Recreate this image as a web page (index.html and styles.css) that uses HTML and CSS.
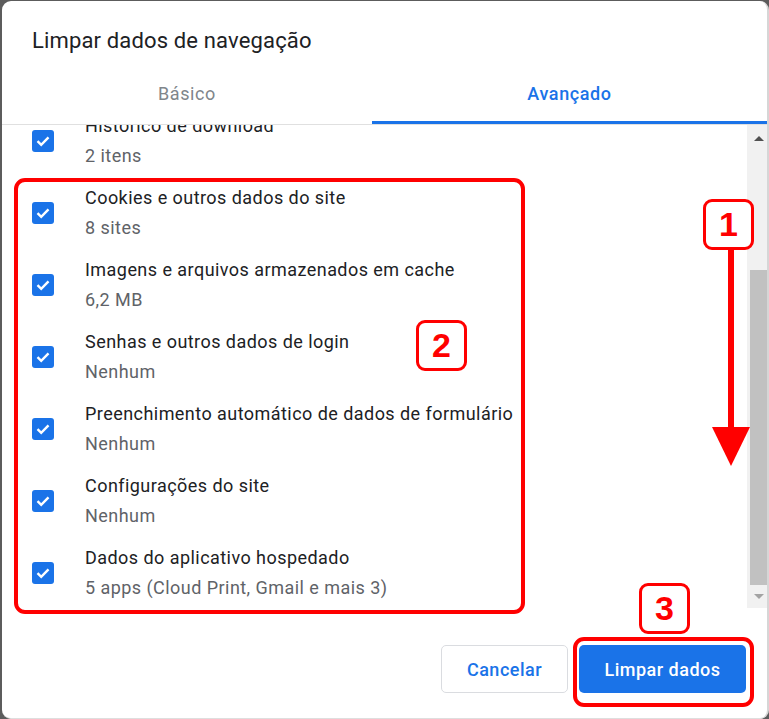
FILE: index.html
```html
<!DOCTYPE html>
<html lang="pt-BR">
<head>
<meta charset="utf-8">
<title>Limpar dados de navegação</title>
<link rel="stylesheet" href="styles.css">
</head>
<body>
<div class="dialog">
  <h1 class="title">Limpar dados de navegação</h1>
  <div class="tabs">
    <div class="tab">Básico</div>
    <div class="tab active">Avançado</div>
  </div>
  <div class="content">
    <div class="list">
      <div class="item">
        <span class="check"><svg viewBox="0 0 22 22" width="22" height="22"><path d="M5.5 11.2l3.7 3.6 7.3-7.4" fill="none" stroke="#fff" stroke-width="2.4"/></svg></span>
        <div class="texts"><div class="label">Histórico de download</div><div class="sub">2 itens</div></div>
      </div>
      <div class="item">
        <span class="check"><svg viewBox="0 0 22 22" width="22" height="22"><path d="M5.5 11.2l3.7 3.6 7.3-7.4" fill="none" stroke="#fff" stroke-width="2.4"/></svg></span>
        <div class="texts"><div class="label">Cookies e outros dados do site</div><div class="sub">8 sites</div></div>
      </div>
      <div class="item">
        <span class="check"><svg viewBox="0 0 22 22" width="22" height="22"><path d="M5.5 11.2l3.7 3.6 7.3-7.4" fill="none" stroke="#fff" stroke-width="2.4"/></svg></span>
        <div class="texts"><div class="label">Imagens e arquivos armazenados em cache</div><div class="sub">6,2 MB</div></div>
      </div>
      <div class="item">
        <span class="check"><svg viewBox="0 0 22 22" width="22" height="22"><path d="M5.5 11.2l3.7 3.6 7.3-7.4" fill="none" stroke="#fff" stroke-width="2.4"/></svg></span>
        <div class="texts"><div class="label">Senhas e outros dados de login</div><div class="sub">Nenhum</div></div>
      </div>
      <div class="item">
        <span class="check"><svg viewBox="0 0 22 22" width="22" height="22"><path d="M5.5 11.2l3.7 3.6 7.3-7.4" fill="none" stroke="#fff" stroke-width="2.4"/></svg></span>
        <div class="texts"><div class="label">Preenchimento automático de dados de formulário</div><div class="sub">Nenhum</div></div>
      </div>
      <div class="item">
        <span class="check"><svg viewBox="0 0 22 22" width="22" height="22"><path d="M5.5 11.2l3.7 3.6 7.3-7.4" fill="none" stroke="#fff" stroke-width="2.4"/></svg></span>
        <div class="texts"><div class="label">Configurações do site</div><div class="sub">Nenhum</div></div>
      </div>
      <div class="item">
        <span class="check"><svg viewBox="0 0 22 22" width="22" height="22"><path d="M5.5 11.2l3.7 3.6 7.3-7.4" fill="none" stroke="#fff" stroke-width="2.4"/></svg></span>
        <div class="texts"><div class="label">Dados do aplicativo hospedado</div><div class="sub">5 apps (Cloud Print, Gmail e mais 3)</div></div>
      </div>
    </div>
    <div class="scrollbar">
      <div class="sb-btn"><span class="tri-up"></span></div>
      <div class="thumb"></div>
      <div class="sb-btn sb-down"><span class="tri-down"></span></div>
    </div>
  </div>
  <div class="footer">
    <button class="btn btn-cancel">Cancelar</button>
    <button class="btn btn-primary">Limpar dados</button>
  </div>

  <div class="anno anno-box2"></div>
  <div class="anno anno-box3"></div>
  <div class="anno badge badge1">1</div>
  <div class="anno badge badge2">2</div>
  <div class="anno badge badge3">3</div>
  <svg class="anno arrow" width="40" height="216" viewBox="0 0 40 216">
    <rect x="17" y="0" width="6" height="180" fill="#ff0000"/>
    <path d="M1 177 L39 177 L20 216 Z" fill="#ff0000"/>
  </svg>
</div>
</body>
</html>
```

FILE: styles.css
```css
* { box-sizing: border-box; }
html, body { margin: 0; padding: 0; }
body {
  background: #5c5c5c;
  width: 769px;
  height: 719px;
  overflow: hidden;
  font-family: Roboto, "Noto Sans", Arial, sans-serif;
}
.dialog {
  position: relative;
  margin: 1px 0 0 2px;
  width: 767px;
  height: 718px;
  background: #fff;
  border-radius: 9px;
  border-right: 2px solid #d6d6d6;
  border-bottom: 1px solid #dedede;
  display: flex;
  flex-direction: column;
  overflow: hidden;
}
.title {
  margin: 0;
  padding: 27px 0 8px 30px;
  font-size: 22px;
  line-height: 26px;
  font-weight: 400;
  letter-spacing: 0.15px;
  color: #202124;
}
.tabs {
  display: flex;
  border-bottom: 1px solid #e0e0e0;
}
.tab {
  padding: 22px 0 17px;
  font-size: 18px;
  line-height: 20px;
  letter-spacing: 0.6px;
  text-align: center;
  color: #80868b;
  border-bottom: 3px solid transparent;
  font-weight: 400;
}
.tab:first-child { width: 370px; }
.tab.active {
  flex: 1;
  color: #1a73e8;
  border-bottom-color: #1a73e8;
  font-weight: 500;
}
.content {
  display: flex;
  height: 483px;
}
.list {
  flex: 1;
  overflow: hidden;
}
.item {
  display: flex;
  align-items: center;
  height: 72px;
  padding-left: 30px;
}
.item:first-child { margin-top: -20px; }
.check {
  width: 22px;
  height: 22px;
  background: #1a73e8;
  border-radius: 3px;
  display: flex;
  flex: none;
}
.texts { margin-left: 31px; }
.label {
  font-size: 18px;
  line-height: 20px;
  letter-spacing: 0.45px;
  color: #202124;
}
.sub {
  margin-top: 10px;
  font-size: 18px;
  line-height: 20px;
  letter-spacing: 0.45px;
  color: #5f6368;
}
.scrollbar {
  width: 20px;
  background: #f1f1f1;
  display: flex;
  flex-direction: column;
  align-items: flex-end;
}
.sb-btn {
  width: 17px;
  height: 28px;
  display: flex;
  justify-content: center;
  padding-top: 11px;
}
.tri-up {
  width: 0; height: 0;
  border-left: 5px solid transparent;
  border-right: 5px solid transparent;
  border-bottom: 5px solid #505050;
}
.thumb {
  margin-top: 117px;
  width: 17px;
  height: 315px;
  background: #c1c1c1;
}
.sb-down { height: 23px; padding-top: 9px; }
.tri-down {
  width: 0; height: 0;
  border-left: 5px solid transparent;
  border-right: 5px solid transparent;
  border-top: 5px solid #a3a3a3;
}
.footer {
  flex: 1;
  display: flex;
  justify-content: flex-end;
  align-items: flex-start;
  gap: 11px;
  padding: 37px 21px 0 0;
}
.btn {
  height: 48px;
  border-radius: 5px;
  font-family: Roboto, "Noto Sans", Arial, sans-serif;
  font-size: 18px;
  letter-spacing: 0.5px;
  font-weight: 500;
  padding: 0;
  cursor: pointer;
}
.btn-cancel {
  width: 127px;
  background: #fff;
  color: #1a73e8;
  border: 1px solid #dadce0;
}
.btn-primary {
  width: 167px;
  background: #1a73e8;
  color: #fff;
  border: none;
}
.anno { position: absolute; }
.anno-box2 {
  left: 12px; top: 177px;
  width: 511px; height: 436px;
  border: 4px solid #ff0000;
  border-radius: 11px;
}
.anno-box3 {
  left: 571px; top: 636px;
  width: 181px; height: 70px;
  border: 4px solid #ff0000;
  border-radius: 11px;
}
.badge {
  width: 51px; height: 51px;
  border: 3px solid #ff0000;
  border-radius: 9px;
  background: #fff;
  color: #ff0000;
  font-family: "Liberation Sans", Arial, sans-serif;
  font-weight: 700;
  font-size: 34px;
  display: flex;
  align-items: center;
  justify-content: center;
}
.badge1 { left: 701px; top: 198px; }
.badge2 { left: 414px; top: 319px; }
.badge3 { left: 637px; top: 582px; }
.arrow { left: 709px; top: 249px; }
```
